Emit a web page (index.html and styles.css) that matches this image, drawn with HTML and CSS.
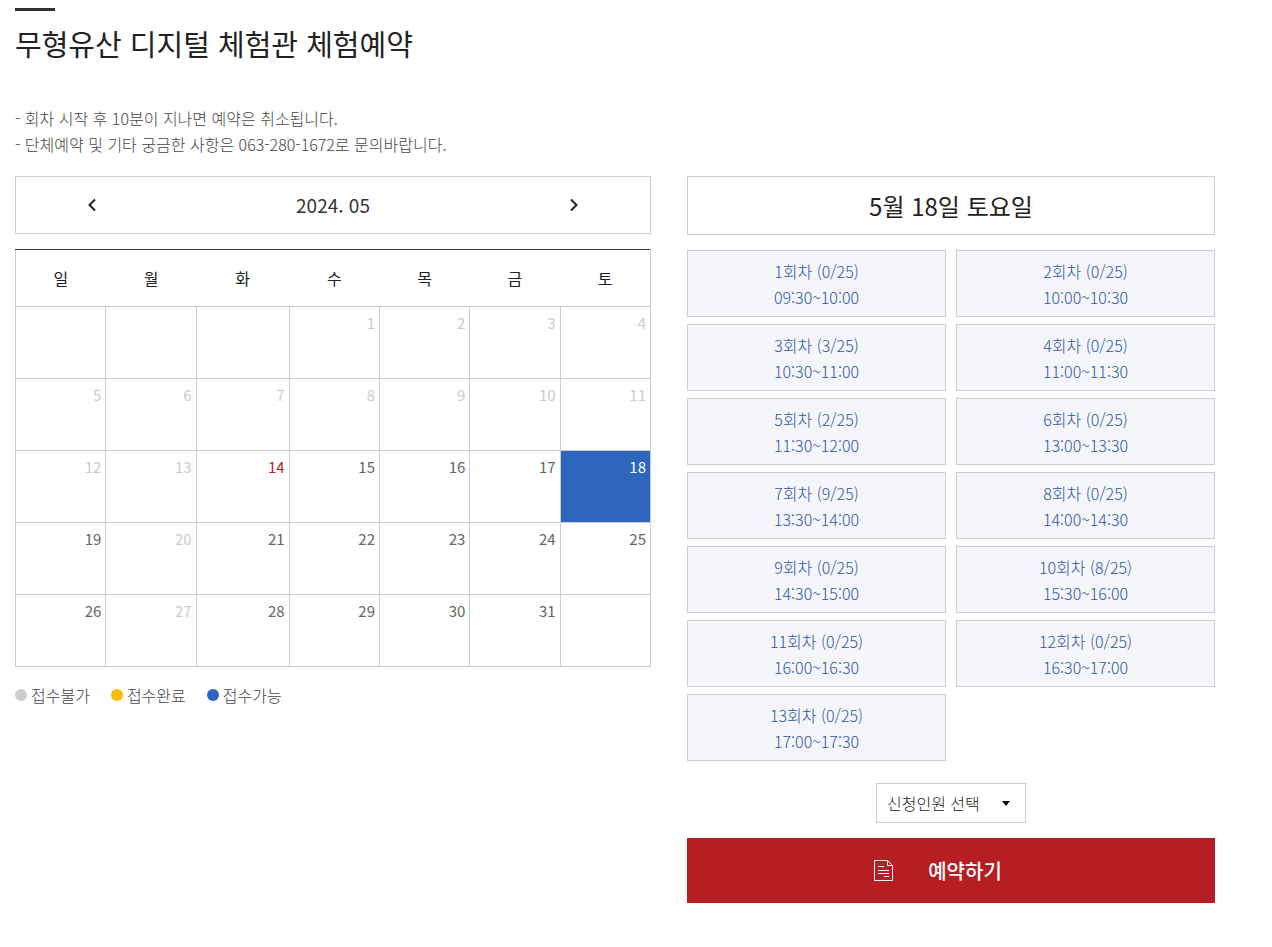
FILE: index.html
```html
<!DOCTYPE html>
<html lang="ko">
<head>
  <meta charset="UTF-8">
  <meta name="viewport" content="width=device-width, initial-scale=1.0">
  <title>무형유산 디지털 체험관 체험예약</title>
  <link rel="stylesheet" href="styles.css">
</head>
<body>
  <main class="container">
    <h1 class="page-title">무형유산 디지털 체험관 체험예약</h1>
    <ul class="notice">
      <li>- 회차 시작 후 10분이 지나면 예약은 취소됩니다.</li>
      <li>- 단체예약 및 기타 궁금한 사항은 063-280-1672로 문의바랍니다.</li>
    </ul>

    <div class="reserve">
      <section class="calendar-area">
        <div class="month-nav">
          <button type="button" class="month-btn" aria-label="이전 달">
            <svg width="8" height="14" viewBox="0 0 8 14"><path d="M7 1.5L1.5 7L7 12.5"/></svg>
          </button>
          <h2>2024. 05</h2>
          <button type="button" class="month-btn" aria-label="다음 달">
            <svg width="8" height="14" viewBox="0 0 8 14"><path d="M1 1.5L6.5 7L1 12.5"/></svg>
          </button>
        </div>

        <table class="calendar">
          <colgroup>
            <col><col><col class="col-wide"><col><col><col><col>
          </colgroup>
          <thead>
            <tr><th>일</th><th>월</th><th>화</th><th>수</th><th>목</th><th>금</th><th>토</th></tr>
          </thead>
          <tbody>
            <tr><td></td><td></td><td></td><td class="off">1</td><td class="off">2</td><td class="off">3</td><td class="off">4</td></tr>
            <tr><td class="off">5</td><td class="off">6</td><td class="off">7</td><td class="off">8</td><td class="off">9</td><td class="off">10</td><td class="off">11</td></tr>
            <tr><td class="off">12</td><td class="off">13</td><td class="today"><a href="#">14</a></td><td><a href="#">15</a></td><td><a href="#">16</a></td><td><a href="#">17</a></td><td class="selected"><a href="#">18</a></td></tr>
            <tr><td><a href="#">19</a></td><td class="off">20</td><td><a href="#">21</a></td><td><a href="#">22</a></td><td><a href="#">23</a></td><td><a href="#">24</a></td><td><a href="#">25</a></td></tr>
            <tr><td><a href="#">26</a></td><td class="off">27</td><td><a href="#">28</a></td><td><a href="#">29</a></td><td><a href="#">30</a></td><td><a href="#">31</a></td><td></td></tr>
          </tbody>
        </table>

        <ul class="legend">
          <li class="legend-off">접수불가</li>
          <li class="legend-full">접수완료</li>
          <li class="legend-open">접수가능</li>
        </ul>
      </section>

      <form class="time-area">
        <h2 class="date-title">5월 18일 토요일</h2>
        <div class="slots">
          <button type="button" class="slot">1회차 (0/25)<br>09:30~10:00</button>
          <button type="button" class="slot">2회차 (0/25)<br>10:00~10:30</button>
          <button type="button" class="slot">3회차 (3/25)<br>10:30~11:00</button>
          <button type="button" class="slot">4회차 (0/25)<br>11:00~11:30</button>
          <button type="button" class="slot">5회차 (2/25)<br>11:30~12:00</button>
          <button type="button" class="slot">6회차 (0/25)<br>13:00~13:30</button>
          <button type="button" class="slot">7회차 (9/25)<br>13:30~14:00</button>
          <button type="button" class="slot">8회차 (0/25)<br>14:00~14:30</button>
          <button type="button" class="slot">9회차 (0/25)<br>14:30~15:00</button>
          <button type="button" class="slot">10회차 (8/25)<br>15:30~16:00</button>
          <button type="button" class="slot">11회차 (0/25)<br>16:00~16:30</button>
          <button type="button" class="slot">12회차 (0/25)<br>16:30~17:00</button>
          <button type="button" class="slot">13회차 (0/25)<br>17:00~17:30</button>
        </div>

        <div class="people">
          <select class="people-select" aria-label="신청인원 선택">
            <option>신청인원 선택</option>
            <option>1명</option>
            <option>2명</option>
            <option>3명</option>
            <option>4명</option>
          </select>
          <svg class="people-arrow" width="8" height="5" viewBox="0 0 8 5"><path d="M0 0H8L4 5Z"/></svg>
        </div>

        <button type="submit" class="submit-btn">
          <svg width="20" height="21" viewBox="0 0 20 21">
            <path d="M.5 .5H13.5L18.5 5.5V20.5H.5ZM13.5 .5V5.5H18.5M4 6.5H10M4 10.5H15M4 13.5H15M10 16.5H15"/>
          </svg>
          <span>예약하기</span>
        </button>
      </form>
    </div>
  </main>
</body>
</html>
```
FILE: styles.css
```css
* {
  box-sizing: border-box;
}
body {
  margin: 0;
  font-family: 'Noto Sans CJK KR', 'Noto Sans KR', sans-serif;
  font-size: 16px;
  font-weight: 300;
  line-height: 26px;
  color: #444;
  background: #fff;
}
h1, h2, ul {
  margin: 0;
  padding: 0;
}
h1, h2 {
  font-weight: 400;
}
ul {
  list-style: none;
}
a {
  color: inherit;
  text-decoration: none;
}
button, select {
  font: inherit;
  border-radius: 0;
  cursor: pointer;
}
.container {
  padding: 8px 57px 40px 15px;
}

/* title */
.page-title {
  font-size: 29px;
  line-height: 40px;
  color: #222;
}
.page-title::before {
  content: "";
  display: block;
  width: 40px;
  height: 3px;
  margin-bottom: 12px;
  background: #333;
}
.notice {
  margin: 42px 0 19px;
}

.reserve {
  display: grid;
  grid-template-columns: 636fr 528fr;
  gap: 36px;
  align-items: start;
}

/* calendar */
.month-nav {
  display: flex;
  justify-content: space-between;
  align-items: center;
  height: 58px;
  padding: 0 60px;
  border: 1px solid #ccd1d3;
}
.month-nav h2 {
  font-size: 19px;
  color: #333;
}
.month-btn {
  display: flex;
  justify-content: center;
  align-items: center;
  width: 32px;
  height: 32px;
  padding: 0;
  border: 0;
  background: none;
}
.month-btn path {
  fill: none;
  stroke: #222;
  stroke-width: 2;
}
.calendar {
  width: 100%;
  margin-top: 15px;
  border-collapse: collapse;
  table-layout: fixed;
  border: 1px solid #ccc;
  border-top-color: #333;
}
.col-wide {
  width: 93px;
}
.calendar th {
  height: 57px;
  padding: 0;
  font-weight: 400;
  color: #222;
}
.calendar td {
  height: 72px;
  padding: 4px 4px 0;
  border: 1px solid #ccc;
  font-size: 15px;
  font-weight: 400;
  line-height: 24px;
  text-align: right;
  vertical-align: top;
  color: #666;
}
.calendar td.off {
  color: #ccc;
}
.calendar td.today {
  color: #b71e24;
}
.calendar td.selected {
  background: #2d66bc;
  color: #fff;
}
.legend {
  display: flex;
  gap: 21px;
  margin-top: 15px;
}
.legend li {
  display: flex;
  align-items: center;
  gap: 4px;
}
.legend li::before {
  content: "";
  width: 12px;
  height: 12px;
  border-radius: 50%;
}
.legend-off::before {
  background: #ccc;
}
.legend-full::before {
  background: #f9be00;
}
.legend-open::before {
  background: #2d66bc;
}

/* time slots */
.date-title {
  padding: 14px 0;
  border: 1px solid #ccced6;
  font-size: 24px;
  line-height: 29px;
  text-align: center;
  color: #222;
}
.slots {
  display: grid;
  grid-template-columns: 1fr 1fr;
  gap: 7px 10px;
  margin-top: 15px;
}
.slot {
  padding: 7px 0 6px;
  border: 1px solid #ccced6;
  background: #f4f6f9;
  line-height: 26px;
  color: #3053a8;
}
.people {
  position: relative;
  width: 150px;
  margin: 22px auto 15px;
}
.people-select {
  display: block;
  width: 100%;
  height: 40px;
  padding: 0 30px 0 10px;
  border: 1px solid #ccc;
  background: #fff;
  font-size: 16px;
  color: #222;
  appearance: none;
}
.people-arrow {
  position: absolute;
  top: 18px;
  right: 16px;
  pointer-events: none;
}
.submit-btn {
  display: flex;
  justify-content: center;
  align-items: center;
  gap: 34px;
  width: 100%;
  height: 65px;
  padding: 0 26px 0 0;
  border: 0;
  background: #b71e24;
  font-size: 20px;
  font-weight: 500;
  color: #fff;
}
.submit-btn path {
  fill: none;
  stroke: #fff;
}
```
